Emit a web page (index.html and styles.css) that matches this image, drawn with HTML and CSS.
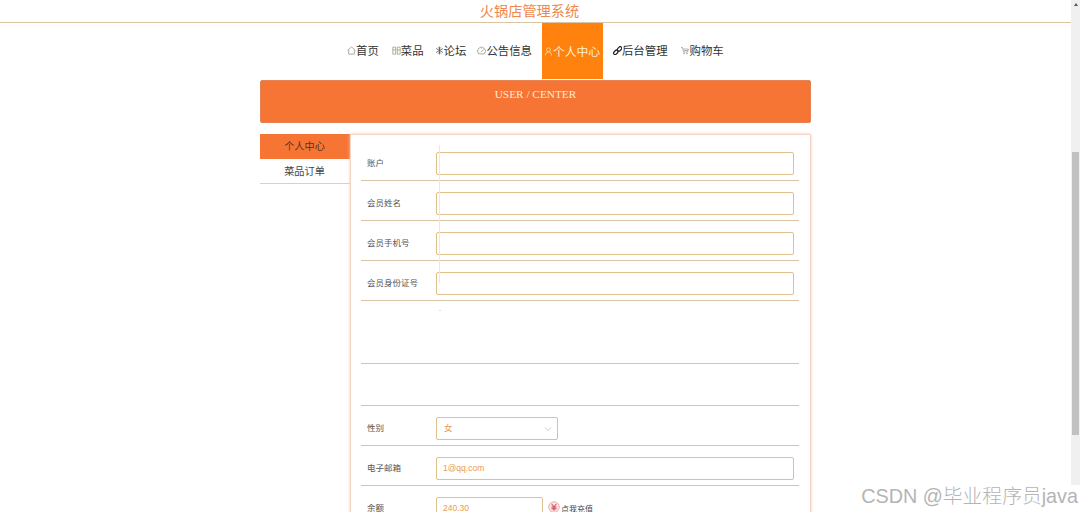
FILE: index.html
```html
<!DOCTYPE html>
<html lang="zh-CN">
<head>
    <meta charset="UTF-8">
    <meta name="viewport" content="width=device-width, initial-scale=1.0">
    <title>火锅店管理系统</title>
    <link rel="stylesheet" href="styles.css">
</head>
<body>
    <div class="page">
        <header class="site-title">火锅店管理系统</header>

        <nav class="nav">
            <a class="nav-item"><svg class="icon" viewBox="0 0 16 16"><path d="M1 8 8 1.500l7 6.500M3 7v7.500h10V7"/></svg><span>首页</span></a>
            <a class="nav-item menu"><svg class="icon green" viewBox="0 0 16 16"><path d="M1.500 2h5v5h-5zM9.500 2h5v5h-5zM1.500 7v7.500h5V7M9.500 7v7.500h5V7"/></svg><span>菜品</span></a>
            <a class="nav-item forum"><svg class="icon dark" viewBox="0 0 16 16"><path d="M8 1v14M2 4.500l12 7M14 4.500l-12 7M5.500 2.500 8 5l2.500-2.500M5.500 13.500 8 11l2.500 2.500"/></svg><span>论坛</span></a>
            <a class="nav-item notice"><svg class="icon" viewBox="0 0 16 16"><path d="M3 14a7 7 0 1 1 10 0zM7 11l5-5M3 9h1M8 4v1"/></svg><span>公告信息</span></a>
            <a class="nav-item active"><svg class="icon" viewBox="0 0 16 16"><circle cx="8" cy="5" r="3.500"/><path d="M2.500 15c0-4 2-6 5.500-6s5.500 2 5.500 6"/></svg><span>个人中心</span></a>
            <a class="nav-item admin"><svg class="icon link" viewBox="0 0 16 16"><rect x="7" y="2.500" width="9" height="5.500" rx="2.700" transform="rotate(-45 11.500 5.200)"/><rect x="0.500" y="8.500" width="9" height="5.500" rx="2.700" transform="rotate(-45 5 11.200)"/></svg><span>后台管理</span></a>
            <a class="nav-item cart"><svg class="icon" viewBox="0 0 16 16"><path d="M0 2h3l2 9h8l2-6H4M6 8h8"/><circle cx="6" cy="14" r="1"/><circle cx="12" cy="14" r="1"/></svg><span>购物车</span></a>
        </nav>

        <main class="container">
            <div class="banner">USER / CENTER</div>

            <div class="content">
                <aside class="side">
                    <a class="side-item current">个人中心</a>
                    <a class="side-item">菜品订单</a>
                </aside>

                <form class="panel">
                    <div class="row">
                        <label>账户</label>
                        <div class="field"></div>
                    </div>
                    <div class="row">
                        <label>会员姓名</label>
                        <div class="field"></div>
                    </div>
                    <div class="row">
                        <label>会员手机号</label>
                        <div class="field"></div>
                    </div>
                    <div class="row">
                        <label>会员身份证号</label>
                        <div class="field"></div>
                    </div>
                    <div class="row photo"></div>
                    <div class="row blank"></div>
                    <div class="row">
                        <label>性别</label>
                        <div class="field select"><span>女</span><svg class="arrow" viewBox="0 0 8 8"><path d="M1 2.500 4 5.500l3-3"/></svg></div>
                    </div>
                    <div class="row">
                        <label>电子邮箱</label>
                        <div class="field">1@qq.com</div>
                    </div>
                    <div class="row">
                        <label>余额</label>
                        <div class="field money">240.30</div>
                        <svg class="coin" viewBox="0 0 12 12"><circle cx="6" cy="6" r="5.300"/><path d="M3.500 2.800 6 5.700l2.500-2.900M6 5.700v4M3.500 6h5M3.500 7.800h5"/></svg>
                        <span class="recharge">点我充值</span>
                    </div>
                    <span class="guide"></span>
                </form>
            </div>
        </main>
    </div>

    <div class="scrollbar"><span class="up"></span><span class="thumb"></span></div>
    <div class="watermark">CSDN @毕业程序员java</div>
</body>
</html>
```

FILE: styles.css
```css
* {
    box-sizing: border-box;
}
body {
    margin: 0;
    height: 512px;
    overflow: hidden;
    background: #fff;
    font-family: "Liberation Sans", "Noto Sans CJK SC", sans-serif;
}
.page {
    width: 1071px;
    height: 512px;
    overflow: hidden;
}
.site-title {
    height: 23px;
    padding-right: 12px;
    border-bottom: 1px solid #d9c5a4;
    color: #ee8850;
    font-size: 14.2px;
    line-height: 22px;
    text-align: center;
}
/* ナビ */
.nav {
    display: flex;
    height: 57px;
    padding-left: 344px;
}
.nav-item {
    display: flex;
    align-items: center;
    height: 55px;
    padding: 0 3px;
    color: #333;
    font-size: 11.4px;
    white-space: nowrap;
}
.nav-item span {
    margin-top: -2px;
}
.nav-item.menu {
    margin-left: 7px;
}
.nav-item.forum {
    margin-left: 5px;
}
.nav-item.notice {
    margin-left: 5px;
}
.nav-item.active {
    width: 61px;
    margin-left: 7px;
    height: 56px;
    padding: 0 2px;
    background: #ff820f;
    color: #fff1cf;
    font-size: 11.8px;
}
.nav-item.admin,
.nav-item.cart {
    margin-left: 7px;
}
.icon {
    flex: none;
    width: 9px;
    height: 9px;
    fill: none;
    stroke: #8a9189;
    stroke-width: 1.3;
}
.icon.green {
    stroke: #8b9872;
}
.icon.dark {
    stroke: #444;
}
.icon.link {
    stroke: #222;
    stroke-width: 2.2;
}
.active .icon {
    stroke: #ffe4a8;
}
.cart .icon {
    width: 8px;
    margin-right: 1px;
}
.container {
    width: 551px;
    margin-left: 260px;
}
.banner {
    height: 43px;
    border: 1px solid #e58354;
    border-radius: 2px;
    background: #f77534;
    color: #ffe9d5;
    font-family: "Liberation Serif", serif;
    font-size: 11.3px;
    line-height: 26px;
    text-align: center;
}
.content {
    display: flex;
    margin-top: 11px;
}
.side {
    width: 90px;
}
.side-item {
    display: block;
    height: 25px;
    padding-right: 1px;
    border-bottom: 1px solid #e8cfa9;
    color: #444;
    font-size: 10.2px;
    line-height: 25px;
    text-align: center;
}
.side-item.current {
    border-bottom-color: #f77534;
    background: #f77534;
    color: #62301a;
}
.panel {
    position: relative;
    width: 461px;
    height: 420px;
    padding: 6px 11px 0 10px;
    border: 1px solid #f3d5c8;
    box-shadow: 0 0 3px #f5c9b8;
}
.row {
    display: flex;
    align-items: center;
    height: 40px;
    padding: 5px 0 0 6px;
    border-bottom: 1px solid #d8c3a4;
}
.row.photo {
    height: 63px;
}
.row.blank {
    height: 42px;
}
.row label {
    width: 69px;
    margin-top: -2px;
    color: #555;
    font-size: 8.5px;
    white-space: nowrap;
}
.field {
    width: 358px;
    height: 23px;
    padding-left: 6px;
    border: 1px solid #e0c08e;
    border-radius: 2px;
    color: #e99b4b;
    font-size: 8.5px;
    line-height: 21px;
}
.select {
    display: flex;
    justify-content: space-between;
    width: 122px;
    padding: 0 5px 0 7px;
}
.arrow {
    width: 8px;
    height: 8px;
    margin-top: 7px;
    fill: none;
    stroke: #c8ccc8;
}
.money {
    width: 107px;
}
.coin {
    width: 12px;
    height: 12px;
    margin: -2px 0 0 5px;
    fill: #fbe3e1;
    stroke: #e6a2a2;
    stroke-width: 0.8;
}
.coin path {
    fill: none;
    stroke: #cc3d4b;
    stroke-width: 1;
}
.recharge {
    margin-left: 1px;
    color: #444;
    font-size: 8px;
}
/* 入力欄に重なる細い縦線 */
.guide {
    position: absolute;
    top: 10px;
    left: 88px;
    width: 1px;
    height: 138px;
    background: #f3e4dc;
}
.guide::after {
    content: "";
    position: absolute;
    top: 165px;
    width: 2px;
    height: 1px;
    background: #e6dcd8;
}
/* 右端のスクロールバー */
.scrollbar {
    position: absolute;
    top: 0;
    right: 0;
    width: 9px;
    height: 485px;
    background: #f0f0f0;
}
.up {
    display: block;
    width: 4px;
    margin: 3px 0 0 3px;
    border: 2px solid transparent;
    border-top: 0;
    border-bottom: 3px solid #555;
}
.thumb {
    display: block;
    width: 7px;
    height: 283px;
    margin: 146px 0 0 1px;
    background: #c1c1c1;
}
.watermark {
    position: absolute;
    right: 2px;
    bottom: 3px;
    color: #b4b4b4;
    font-size: 19.8px;
    font-weight: 300;
    line-height: 26px;
    white-space: nowrap;
}
```
